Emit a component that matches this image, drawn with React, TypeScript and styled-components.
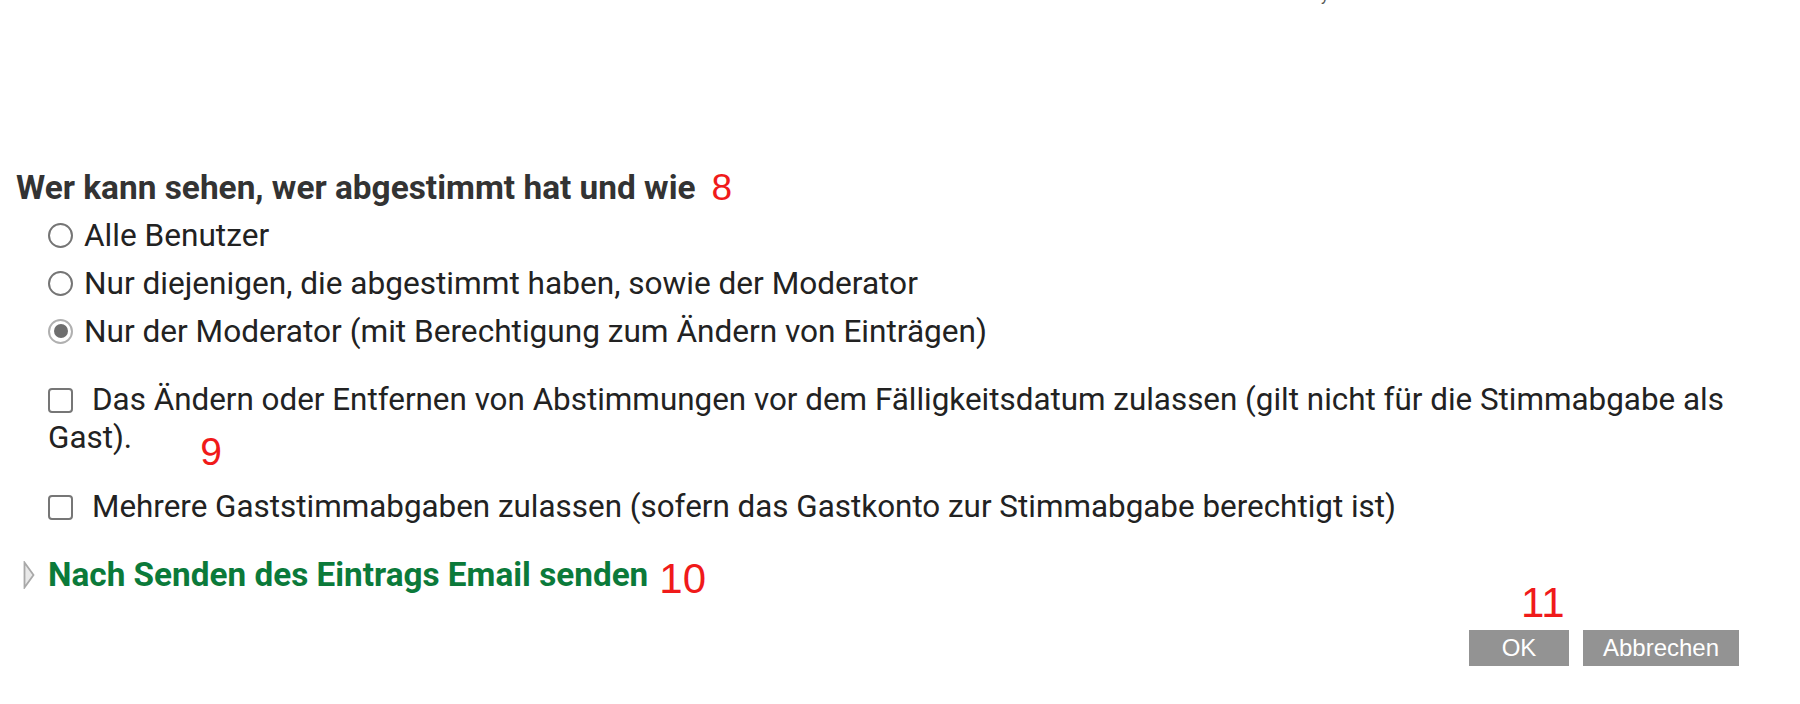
import styled, { createGlobalStyle } from 'styled-components';

const GlobalStyle = createGlobalStyle`
  html, body {
    margin: 0;
    padding: 0;
    background: #fff;
  }
  body {
    font-family: Roboto, "Liberation Sans", Arial, sans-serif;
    color: #222;
  }
`;

const Page = styled.div`
  width: 1800px;
  height: 704px;
  overflow: hidden;
  box-sizing: border-box;
`;

const Fragment = styled.div`
  height: 6px;
  overflow: hidden;
  padding-left: 1321px;
  font-size: 16px;
  line-height: 20px;
  color: #555;
  span {
    display: block;
    margin-top: -14px;
  }
`;

const Form = styled.div`
  padding: 162px 40px 0 16px;
`;

const Heading = styled.h3`
  margin: 0;
  font-size: 33.4px;
  line-height: 40px;
  font-weight: 700;
  color: #333;
`;

const Marker = styled.span<{ $size: number; $drop?: number; $gap: number }>`
  font-family: "Liberation Sans", Arial, sans-serif;
  font-weight: 400;
  font-size: ${p => p.$size}px;
  color: #f01a1a;
  margin-left: ${p => p.$gap}px;
  vertical-align: ${p => -(p.$drop || 0)}px;
  line-height: 0;
`;

const OptionList = styled.div`
  padding-left: 32px;
  margin-top: 3px;
`;

const OptionRow = styled.label`
  display: flex;
  align-items: center;
  gap: 11px;
  height: 48px;
  font-size: 31.6px;
  color: #222;
`;

const Radio = styled.span<{ $checked?: boolean }>`
  width: 25px;
  height: 25px;
  box-sizing: border-box;
  border-radius: 50%;
  border: 2px solid ${p => (p.$checked ? '#b0b0b0' : '#757575')};
  display: flex;
  align-items: center;
  justify-content: center;
  flex-shrink: 0;
  &::after {
    content: '';
    display: ${p => (p.$checked ? 'block' : 'none')};
    width: 14px;
    height: 14px;
    border-radius: 50%;
    background: #6e6e6e;
  }
`;

const CheckText = styled.p<{ $top: number }>`
  margin: ${p => p.$top}px 0 0;
  padding-left: 32px;
  font-size: 31.4px;
  line-height: 38px;
  color: #222;
`;

const Checkbox = styled.span`
  display: inline-block;
  width: 25px;
  height: 25px;
  box-sizing: border-box;
  border: 2px solid #767676;
  border-radius: 4px;
  margin-right: 19px;
  vertical-align: -3px;
`;

const Expander = styled.div`
  display: flex;
  align-items: center;
  margin-top: 29px;
  height: 40px;
`;

const Arrow = styled.svg`
  width: 12px;
  height: 28px;
  margin-left: 7px;
  margin-right: 13px;
  flex-shrink: 0;
`;

const ExpanderTitle = styled.span`
  font-size: 33.3px;
  font-weight: 700;
  color: #0b7a3a;
  line-height: 40px;
`;

const ButtonBar = styled.div`
  display: flex;
  justify-content: flex-end;
  gap: 14px;
  margin-top: 35px;
  padding-right: 21px;
`;

const ButtonWrap = styled.div`
  position: relative;
`;

const Button = styled.button<{ $width: number }>`
  width: ${p => p.$width}px;
  height: 36px;
  border: none;
  border-radius: 0;
  background: #939393;
  color: #fff;
  font-family: "Liberation Sans", Arial, sans-serif;
  font-size: 24px;
  padding: 0;
  line-height: 36px;
`;

const FloatingMarker = styled.span`
  position: absolute;
  left: 52px;
  bottom: calc(100% + 6px);
  font-family: "Liberation Sans", Arial, sans-serif;
  font-size: 42px;
  line-height: 1;
  color: #f01a1a;
`;

const options = [
  { label: 'Alle Benutzer', checked: false },
  { label: 'Nur diejenigen, die abgestimmt haben, sowie der Moderator', checked: false },
  { label: 'Nur der Moderator (mit Berechtigung zum Ändern von Einträgen)', checked: true },
];

export default function App() {
  return (
    <>
      <GlobalStyle />
      <Page>
        <Fragment>
          <span>y</span>
        </Fragment>
        <Form>
          <Heading>
            Wer kann sehen, wer abgestimmt hat und wie
            <Marker $size={37} $gap={16} $drop={1}>8</Marker>
          </Heading>
          <OptionList>
            {options.map(o => (
              <OptionRow key={o.label}>
                <Radio $checked={o.checked} />
                {o.label}
              </OptionRow>
            ))}
          </OptionList>
          <CheckText $top={26}>
            <Checkbox />
            Das Ändern oder Entfernen von Abstimmungen vor dem Fälligkeitsdatum zulassen (gilt nicht für die
            Stimmabgabe als Gast).
            <Marker $size={39} $gap={68} $drop={17}>9</Marker>
          </CheckText>
          <CheckText $top={31}>
            <Checkbox />
            Mehrere Gaststimmabgaben zulassen (sofern das Gastkonto zur Stimmabgabe berechtigt ist)
          </CheckText>
          <Expander>
            <Arrow viewBox="0 0 12 28">
              <path d="M1.5 1.5 L10.5 14 L1.5 26.5 Z" fill="#e9e9e9" stroke="#a9a9a9" strokeWidth="1.8" />
            </Arrow>
            <ExpanderTitle>
              Nach Senden des Eintrags Email senden
              <Marker $size={42} $gap={11} $drop={7}>10</Marker>
            </ExpanderTitle>
          </Expander>
          <ButtonBar>
            <ButtonWrap>
              <FloatingMarker>11</FloatingMarker>
              <Button $width={100}>OK</Button>
            </ButtonWrap>
            <ButtonWrap>
              <Button $width={156}>Abbrechen</Button>
            </ButtonWrap>
          </ButtonBar>
        </Form>
      </Page>
    </>
  );
}
